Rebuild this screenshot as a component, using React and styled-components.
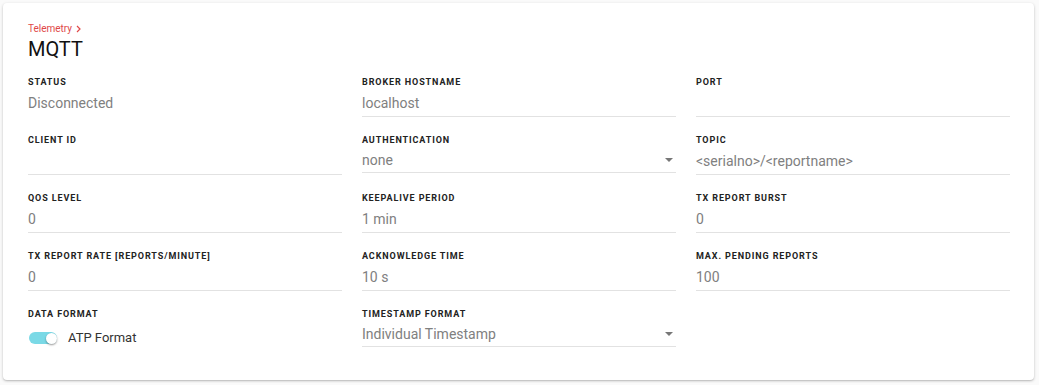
import styled, { createGlobalStyle } from "styled-components"

const GlobalStyle = createGlobalStyle`
  html, body {
    margin: 0;
    padding: 0;
    background: #fafafa;
    font-family: Roboto, "Liberation Sans", Arial, sans-serif;
  }
`

const Page = styled.div`
  padding: 3px;
`

const Card = styled.div`
  width: 1031px;
  height: 377px;
  box-sizing: border-box;
  background: #fff;
  border-radius: 4px;
  box-shadow: 0 1px 3px rgba(0, 0, 0, 0.22), 0 1px 1px rgba(0, 0, 0, 0.08);
  padding: 20px 24px 0 25px;
`

const Crumb = styled.div`
  display: flex;
  align-items: center;
  gap: 4px;
  font-size: 10px;
  line-height: 12px;
  color: #e04848;
`

const Title = styled.h1`
  margin: 2px 0 15px;
  font-size: 20px;
  line-height: 24px;
  font-weight: 400;
  color: #111;
`

const Grid = styled.div`
  display: grid;
  grid-template-columns: repeat(3, 314px);
  column-gap: 20px;
  row-gap: 17px;
`

const Field = styled.div`
  display: flex;
  flex-direction: column;
`

const Label = styled.div`
  font-size: 9px;
  line-height: 12px;
  font-weight: 700;
  letter-spacing: 0.9px;
  text-transform: uppercase;
  color: #222;
`

const Value = styled.div`
  height: ${p => (p.$select ? 27 : 29)}px;
  box-sizing: border-box;
  display: flex;
  align-items: center;
  justify-content: space-between;
  padding: 2px 2px 0 0;
  font-size: 14px;
  color: #808080;
  border-bottom: 1px solid ${p => (p.$plain ? "transparent" : "#e2e2e2")};
`

const Arrow = styled.span`
  width: 0;
  height: 0;
  border-left: 4px solid transparent;
  border-right: 4px solid transparent;
  border-top: 4px solid #777;
  margin-right: 1px;
`

const ToggleRow = styled.div`
  display: flex;
  align-items: center;
  gap: 11px;
  height: 29px;
  padding-top: 6px;
  box-sizing: border-box;
  font-size: 13px;
  color: #333;
`

const Track = styled.span`
  position: relative;
  width: 28px;
  height: 12px;
  border-radius: 6px;
  background: #7ad9e6;
  margin-left: 1px;
`

const Knob = styled.span`
  position: absolute;
  right: 0;
  top: 1px;
  width: 11px;
  height: 11px;
  border-radius: 50%;
  background: #fff;
  box-shadow: 0 1px 2px rgba(0, 0, 0, 0.4);
`

const fields = [
  { label: "Status", value: "Disconnected", plain: true },
  { label: "Broker Hostname", value: "localhost" },
  { label: "Port", value: "" },
  { label: "Client ID", value: "" },
  { label: "Authentication", value: "none", select: true },
  { label: "Topic", value: "<serialno>/<reportname>" },
  { label: "QoS Level", value: "0" },
  { label: "Keepalive Period", value: "1 min" },
  { label: "TX Report Burst", value: "0" },
  { label: "TX Report Rate [Reports/Minute]", value: "0" },
  { label: "Acknowledge Time", value: "10 s" },
  { label: "Max. Pending Reports", value: "100" },
]

const App = () => {
  return (
    <Page>
      <GlobalStyle />
      <Card>
        <Crumb>
          Telemetry
          <svg width="5" height="8" viewBox="0 0 5 8">
            <polyline points="1,1 4,4 1,7" fill="none" stroke="#e04848" strokeWidth="1.2" />
          </svg>
        </Crumb>
        <Title>MQTT</Title>
        <Grid>
          {fields.map(f => (
            <Field key={f.label}>
              <Label>{f.label}</Label>
              <Value $plain={f.plain} $select={f.select}>
                <span>{f.value}</span>
                {f.select && <Arrow />}
              </Value>
            </Field>
          ))}
          <Field>
            <Label>Data Format</Label>
            <ToggleRow>
              <Track>
                <Knob />
              </Track>
              ATP Format
            </ToggleRow>
          </Field>
          <Field>
            <Label>Timestamp Format</Label>
            <Value $select>
              <span>Individual Timestamp</span>
              <Arrow />
            </Value>
          </Field>
        </Grid>
      </Card>
    </Page>
  )
}

export default App
